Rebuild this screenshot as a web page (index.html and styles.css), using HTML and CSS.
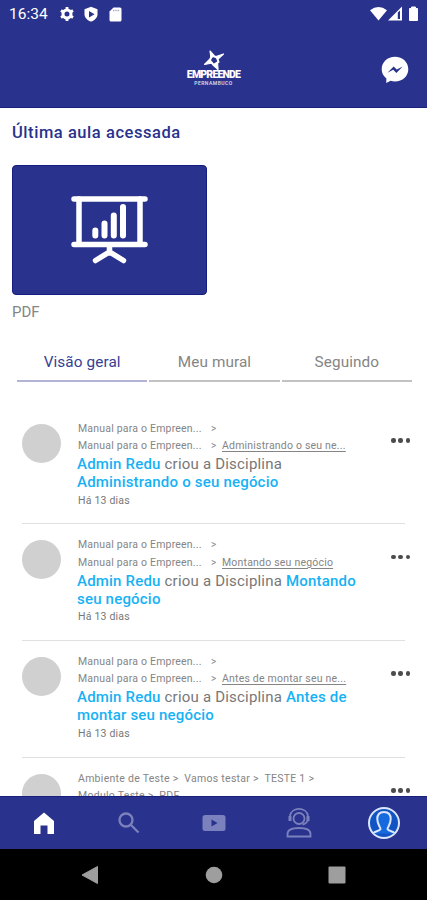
FILE: index.html
```html
<!DOCTYPE html>
<html lang="pt-BR">
<head>
<meta charset="utf-8">
<title>Empreende Pernambuco</title>
<link rel="stylesheet" href="styles.css">
</head>
<body>
<div class="app">
  <header class="top">
    <div class="status">
      <span class="clock">16:34</span>
      <svg class="status-left" width="64" height="18" viewBox="0 0 64 18">
        <g fill="none" stroke="#fff"><circle cx="7" cy="9" r="4" stroke-width="3"/><path d="M7 2v2.500M7 13.500V16M1 5.500l2 1.200M11 11.300l2 1.200M1 12.500l2-1.200M11 6.700l2-1.200" stroke-width="2.800"/></g>
        <path d="M31 1.800l6.500 2.400v5c0 3.500-3 6.200-6.500 7.400-3.500-1.200-6.500-3.900-6.500-7.400v-5z" fill="#fff"/><path d="M29 6l5.500 3.200L29 12.400z" fill="#29328c"/>
        <path d="M53.500 2.500H60a1.500 1.500 0 0 1 1.500 1.500v11a1.500 1.500 0 0 1-1.500 1.500h-9a1.500 1.500 0 0 1-1.500-1.500V6.500z" fill="#fff"/><path d="M53 5.500h7" stroke="#29328c" stroke-width="1.300" stroke-dasharray="1.300 1" opacity=".45"/>
      </svg>
      <svg class="status-right" width="50" height="18" viewBox="0 0 50 18">
        <path d="M0 5.300Q8.500-1.500 17 5.300L8.500 15.500z" fill="#fff"/>
        <path d="M18 15.500L32 1.500v14z" fill="#fff"/><path d="M27.800 14V7.500l2.200-2V14z" fill="#29328c"/>
        <path d="M39.500 3.500h2V2h4v1.500h2v12h-8z" fill="#fff" stroke="#fff" stroke-linejoin="round"/>
      </svg>
    </div>
    <div class="bar">
      <div class="logo">
        <svg width="22" height="20" viewBox="0 0 22 20" fill="none" stroke="#fff" stroke-linejoin="round"><path d="M9 5.500l5 2 1.500 4.500-4.500 3-4.500-4z" stroke-width="2"/><path d="M7 1l4 4.500L8 8zM20.500 4l-6 5.500-1.500-3zM1.500 14.500l5-5 3 3.500zM15 19.500l-5-4.500 4.500-3z" fill="#fff" stroke-width="1.200"/></svg>
        <strong>EMPREENDE</strong>
        <small>PERNAMBUCO</small>
      </div>
      <svg class="messenger" width="28" height="28" viewBox="0 0 28 28"><path d="M14 .8C6.500.8.700 6.200.700 13.200c0 3.800 1.800 7 4.700 9.200L5.200 27l4.400-2.200c1.400.4 2.900.6 4.400.6 7.500 0 13.300-5.300 13.300-12.200S21.500.8 14 .8z" fill="#fff"/><path d="M6.500 16.800l6.100-6.200 3.200 3 5.900-3-6.300 6.300-3.200-3.200z" fill="#29328c"/></svg>
    </div>
  </header>

  <main class="content">
    <h1>Última aula acessada</h1>
    <div class="lesson">
      <svg width="78" height="70" viewBox="0 0 78 70" fill="none" stroke="#fff" stroke-width="5.500" stroke-linecap="round"><path d="M3 4h71M3 49.500h71"/><path d="M8 4v45M69 4v45M38.500 50v8M24.500 65.500l14-8.500 14 8.500"/><path d="M24.300 35.500v5M33.500 28.500v12M42.800 20.500v20M52 12v28.500" stroke-width="6"/></svg>
    </div>
    <p class="kind">PDF</p>
    <div class="tabs">
      <div class="tab active">Visão geral</div>
      <div class="tab">Meu mural</div>
      <div class="tab">Seguindo</div>
    </div>
    <div class="feed">
      <article class="item">
        <div class="avatar"></div>
        <div class="body">
          <div class="crumb"><span>Manual para o Empreen...</span><i>&gt;</i></div>
          <div class="crumb"><span>Manual para o Empreen...</span><i>&gt;</i><u>Administrando o seu ne...</u></div>
          <p><b>Admin Redu</b> criou a Disciplina<br><b>Administrando o seu negócio</b></p>
          <time>Há 13 dias</time>
        </div>
        <div class="more"><i></i><i></i><i></i></div>
      </article>
      <article class="item">
        <div class="avatar"></div>
        <div class="body">
          <div class="crumb"><span>Manual para o Empreen...</span><i>&gt;</i></div>
          <div class="crumb"><span>Manual para o Empreen...</span><i>&gt;</i><u>Montando seu negócio</u></div>
          <p><b>Admin Redu</b> criou a Disciplina <b>Montando<br>seu negócio</b></p>
          <time>Há 13 dias</time>
        </div>
        <div class="more"><i></i><i></i><i></i></div>
      </article>
      <article class="item">
        <div class="avatar"></div>
        <div class="body">
          <div class="crumb"><span>Manual para o Empreen...</span><i>&gt;</i></div>
          <div class="crumb"><span>Manual para o Empreen...</span><i>&gt;</i><u>Antes de montar seu ne...</u></div>
          <p><b>Admin Redu</b> criou a Disciplina <b>Antes de<br>montar seu negócio</b></p>
          <time>Há 13 dias</time>
        </div>
        <div class="more"><i></i><i></i><i></i></div>
      </article>
      <article class="item">
        <div class="avatar"></div>
        <div class="body">
          <div class="crumb path">Ambiente de Teste &gt;&nbsp; Vamos testar &gt;&nbsp; TESTE 1 &gt;</div>
          <div class="crumb path">Modulo Teste &gt;&nbsp; PDF</div>
        </div>
        <div class="more"><i></i><i></i><i></i></div>
      </article>
    </div>
  </main>

  <nav class="nav">
    <div><svg width="24" height="24" viewBox="0 0 24 24"><path d="M12 1.500l10 8.500v13h-6.500v-8.500h-7V23H2V10z" fill="#fff"/></svg></div>
    <div><svg width="22" height="22" viewBox="0 0 22 22" fill="none" stroke="#7a81bd" stroke-width="2.300"><circle cx="8" cy="8" r="6.500"/><path d="M12.500 12.500L20.500 20.500"/></svg></div>
    <div><svg width="24" height="18" viewBox="0 0 24 18"><rect x=".5" y="1" width="23" height="16" rx="2.500" fill="#7a81bd"/><path d="M9.500 5.500l6 3.500-6 3.500z" fill="#29328c"/></svg></div>
    <div><svg width="26" height="32" viewBox="0 0 26 32" fill="none" stroke="#7a81bd" stroke-width="1.800"><circle cx="13" cy="11.500" r="5.500"/><path d="M4 9C5.500-.5 20.500-.5 22 9M22 13c-1 3-3 4-5.500 4.500"/><path d="M4 9v5M22 9v5" stroke-width="3"/><path d="M1.500 29.500V27c0-4 5-6 11.500-6s11.500 2 11.500 6v2.500z"/></svg></div>
    <div><svg width="34" height="34" viewBox="0 0 34 34" fill="none"><circle cx="17" cy="17" r="15" fill="#1254c4" stroke="#dbe6fa" stroke-width="2"/><path d="M6 27.500c2-2.700 7-2.500 7.500-4.500 0-2-3.200-4.500-3.200-10 0-4.500 2.500-7 6.700-7s6.700 2.500 6.700 7c0 5.500-3.200 8-3.200 10 .5 2 5.500 1.800 7.500 4.500" fill="#1769df" stroke="#dbe6fa" stroke-width="2"/></svg></div>
  </nav>
  <div class="system">
    <svg width="18" height="20" viewBox="0 0 18 20"><path d="M1 10L16.500 1.500v17z" fill="#9e9e9e" stroke="#9e9e9e" stroke-linejoin="round"/></svg>
    <svg width="18" height="18" viewBox="0 0 18 18"><circle cx="9" cy="9" r="8.300" fill="#9e9e9e"/></svg>
    <svg width="18" height="18" viewBox="0 0 18 18"><rect x=".5" y=".5" width="17" height="17" rx="1" fill="#9e9e9e"/></svg>
  </div>
</div>
</body>
</html>
```
FILE: styles.css
```css
* { box-sizing: border-box; }
body { margin: 0; background: #fff; font-family: Roboto, sans-serif; }
.app { width: 427px; height: 900px; display: flex; flex-direction: column; overflow: hidden; }
.top { height: 108px; background: #29328c; border-bottom: 1px solid #18207c; flex: none; }
.status { display: flex; align-items: center; height: 28px; padding: 0 7px 0 9px; color: #fff; }
.clock { font-size: 15.5px; width: 51px; }
.status-right { margin-left: auto; }
.bar { display: grid; grid-template-columns: 1fr 60px 1fr; height: 79px; align-items: start; }
.logo { grid-column: 2; display: flex; flex-direction: column; align-items: center; color: #fff; padding-top: 22px; }
.logo strong { font-size: 10.5px; line-height: 12px; font-weight: 900; letter-spacing: -.8px; margin-top: -1px; }
.logo small { font-size: 5px; line-height: 5px; font-weight: 500; letter-spacing: .5px; opacity: .85; }
.messenger { justify-self: end; margin: 28px 18px 0 0; }

.content { flex: 1; min-height: 0; overflow: hidden; }
h1 { margin: 15px 0 0 12px; font-size: 16.5px; line-height: 20px; font-weight: 500; letter-spacing: .55px; color: #29328c; }
.lesson { margin: 22px 0 0 12px; width: 195px; height: 130px; border-radius: 4px; background: #29328c; border: 1px solid #141d80; display: flex; align-items: center; justify-content: center; }
.kind { margin: 7px 0 0 12px; font-size: 15px; line-height: 20px; color: #858585; }
.tabs { display: grid; grid-template-columns: repeat(3, 1fr); gap: 2px; margin: 20px 15px 0 17px; }
.tab { height: 40px; border-bottom: 2px solid #c2c2c2; text-align: center; font-size: 15.3px; line-height: 41px; color: #858585; letter-spacing: .1px; }
.active { color: #373e93; border-color: #b3b4d5; }

.feed { margin: 25.500px 22px 0; }
.item { display: grid; grid-template-columns: 56px 1fr 20px; height: 116.700px; padding-top: 12px; border-bottom: 1px solid #e0e0e0; }
.avatar { width: 39px; height: 39px; margin-top: 4px; border-radius: 50%; background: #d0d0d0; }
.body { white-space: nowrap; }
.crumb { display: flex; height: 17.500px; font-size: 10.5px; line-height: 17.500px; letter-spacing: .2px; color: #858585; }
.crumb span { width: 133px; }
.crumb i { width: 11px; font-style: normal; font-size: 10px; }
.crumb u { text-underline-offset: 2px; }
.path { letter-spacing: .28px; }
.body p { margin: .5px 0 0 -1px; font-size: 15px; line-height: 18px; letter-spacing: .2px; color: #777; }
.body b { color: #16b2f5; font-weight: 500; }
.body time { display: block; font-size: 10.5px; line-height: 16px; padding-top: 1.500px; letter-spacing: .2px; color: #777; }
.more { display: flex; justify-content: space-between; padding: 18.500px 0 0; margin: 0 -5px 0 6px; height: 23px; }
.more i { width: 4.500px; height: 4.500px; border-radius: 50%; background: #4c4c4c; }

.nav { flex: none; height: 53px; background: #29328c; border-top: 1px solid #18207c; display: grid; grid-template-columns: repeat(5, 1fr); place-items: center; padding-left: 1px; }
.nav svg, .system svg { display: block; }
.system { flex: none; height: 51px; background: #000; display: flex; justify-content: space-between; align-items: center; padding: 0 81px; }
```
